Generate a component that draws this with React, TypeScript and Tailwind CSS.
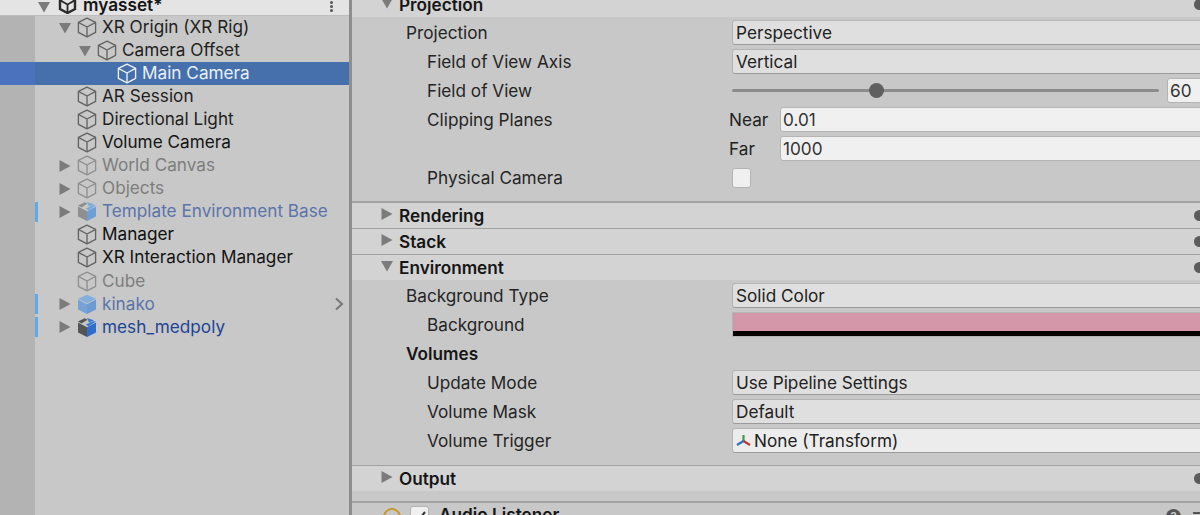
import React from "react";

function Cube({ color = "#636363" }: { color?: string }) {
  return (
    <svg width="20" height="21" viewBox="0 0 20 21" fill="none" stroke={color} strokeWidth="1.35" strokeLinejoin="round">
      <path d="M10 1.2 18.6 5.4V15.4L10 19.8 1.4 15.4V5.4Z" />
      <path d="M1.4 5.4 10 10 18.6 5.4M10 10V19.8" />
    </svg>
  );
}

function PrefabCube({ left, right, top, notch = true }: { left: string; right: string; top: string; notch?: boolean }) {
  return (
    <svg width="20" height="21" viewBox="0 0 20 21">
      <path d="M1 5.6 10 10.2V20L1 15.4Z" fill={left} />
      <path d="M19 5.6 10 10.2V20L19 15.4Z" fill={right} />
      {notch ? (
        <>
          <path d="M1 4.6 7.6 1.2 10.6 2.8 4.4 6.4Z" fill={left} />
          <path d="M8.6 7.8 15.4 4.2 19 4.4 11.6 9.2Z" fill={top} />
          <path d="M10 1 17 3.2 12 5.4Z" fill={top} />
        </>
      ) : (
        <path d="M10 .8 19 4.8 10 9.2 1 4.8Z" fill={top} />
      )}
    </svg>
  );
}

function Arrow({ open, color = "#7b7b7b" }: { open: boolean; color?: string }) {
  return (
    <svg width="12" height="12" viewBox="0 0 12 12">
      <path d={open ? "M0 1H12L6 11.5Z" : "M.5 0 11.5 6 .5 12Z"} fill={color} />
    </svg>
  );
}

function UnityMark() {
  return (
    <svg width="19" height="19" viewBox="0 0 19 19" fill="none" stroke="#2a2a2a" strokeWidth="2.4">
      <path d="M9.5 1 17 5.2V14L9.5 18 2 14V5.2Z" />
      <path d="M2 5.2 9.5 9.5 17 5.2M9.5 9.5V18" strokeWidth="1.8" />
    </svg>
  );
}

type TreeItem = {
  name: string;
  depth: number;
  arrow?: "open" | "closed";
  text: string;
  icon: React.ReactNode;
  selected?: boolean;
  marker?: boolean;
  chevron?: boolean;
};

const dark = "#1f1f1f";
const dim = "#7d7d7d";

const tree: TreeItem[] = [
  { name: "XR Origin (XR Rig)", depth: 0, arrow: "open", text: dark, icon: <Cube /> },
  { name: "Camera Offset", depth: 1, arrow: "open", text: dark, icon: <Cube /> },
  { name: "Main Camera", depth: 2, text: "#eaf0fb", icon: <Cube color="#eef3fb" />, selected: true },
  { name: "AR Session", depth: 0, text: dark, icon: <Cube /> },
  { name: "Directional Light", depth: 0, text: dark, icon: <Cube /> },
  { name: "Volume Camera", depth: 0, text: "#141414", icon: <Cube /> },
  { name: "World Canvas", depth: 0, arrow: "closed", text: dim, icon: <Cube color="#8f8f8f" /> },
  { name: "Objects", depth: 0, arrow: "closed", text: dim, icon: <Cube color="#8f8f8f" /> },
  { name: "Template Environment Base", depth: 0, arrow: "closed", text: "#5b74aa", icon: <PrefabCube left="#8f8f8f" right="#6d9fd6" top="#7aa9dc" />, marker: true },
  { name: "Manager", depth: 0, text: "#0f0f0f", icon: <Cube /> },
  { name: "XR Interaction Manager", depth: 0, text: "#141414", icon: <Cube /> },
  { name: "Cube", depth: 0, text: dim, icon: <Cube color="#8f8f8f" /> },
  { name: "kinako", depth: 0, arrow: "closed", text: "#5b74aa", icon: <PrefabCube left="#75a3d8" right="#6d9ad0" top="#83aede" notch={false} />, marker: true, chevron: true },
  { name: "mesh_medpoly", depth: 0, arrow: "closed", text: "#1e4593", icon: <PrefabCube left="#555555" right="#2f6fcb" top="#3a7ad2" />, marker: true },
];

function TreeRow({ item }: { item: TreeItem }) {
  return (
    <div className={`flex h-[23.05px] items-center ${item.selected ? "bg-[#4570ac]" : ""}`}>
      <div className={`flex h-full w-[35px] shrink-0 ${item.selected ? "bg-[#4a72bd]" : "bg-[#b3b3b3]"}`} />
      <div className={`h-[20px] w-[3px] shrink-0 ${item.marker ? "bg-[#5aabe8]" : ""}`} />
      <div className="flex items-center" style={{ paddingLeft: item.depth * 20 }}>
        <div className="flex w-[39px] shrink-0 items-center justify-start pl-[21px]">
          {item.arrow ? <Arrow open={item.arrow === "open"} /> : null}
        </div>
        <div className="flex w-[25px] shrink-0 items-center">{item.icon}</div>
        <span className="-translate-y-[1px] whitespace-nowrap text-[17.2px] leading-[23px]" style={{ color: item.text }}>{item.name}</span>
      </div>
      {item.chevron ? (
        <svg className="ml-auto mr-[5px]" width="10" height="14" viewBox="0 0 10 14" fill="none" stroke="#777" strokeWidth="2">
          <path d="M2 1.5 8 7 2 12.5" />
        </svg>
      ) : null}
    </div>
  );
}

function Section({ title, open, clip }: { title: string; open: boolean; clip?: boolean }) {
  return (
    <div className={`flex h-[25px] shrink-0 items-center bg-[#d3d3d3] pl-[29px] ${clip ? "-mt-[8px]" : ""}`}>
      <div className="w-[18px] -translate-y-[2px]"><Arrow open={open} /></div>
      <span className="text-[17.2px] font-semibold leading-[24px] text-[#161616]">{title}</span>
      <div className="-mr-[5px] ml-auto h-[11px] w-[11px] rounded-full bg-[#5c5c5c]" />
    </div>
  );
}

function Row({ label, sub, bold, children }: { label?: string; sub?: boolean; bold?: boolean; children?: React.ReactNode }) {
  return (
    <div className="flex h-[29px] shrink-0 items-center">
      <div className={`w-[380px] shrink-0 whitespace-nowrap text-[17.2px] leading-[24px] ${sub ? "pl-[75px]" : "pl-[54px]"} ${bold ? "font-semibold text-[#161616]" : "text-[#252525]"}`}>
        {label}
      </div>
      <div className="flex min-w-0 flex-1 items-center">{children}</div>
    </div>
  );
}

function Dropdown({ children, light }: { children: React.ReactNode; light?: boolean }) {
  return (
    <div className={`-mr-[10px] flex h-[25px] flex-1 items-center gap-[3px] rounded-[3px] border border-[#b4b4b4] border-b-[#9a9a9a] pl-[3px] text-[17.2px] leading-[22px] text-[#222] ${light ? "bg-[#ececec]" : "bg-[#dfdfdf]"}`}>
      {children}
    </div>
  );
}

function Field({ children, label }: { children: React.ReactNode; label: string }) {
  return (
    <>
      <span className="-ml-[3px] w-[51px] shrink-0 text-[17.2px] leading-[24px] text-[#222]">{label}</span>
      <div className="-mr-[10px] flex h-[25px] flex-1 items-center rounded-[3px] border border-[#b4b4b4] bg-[#f0f0f0] pl-[2px] text-[17.2px] leading-[22px] text-[#333]">
        {children}
      </div>
    </>
  );
}

function Line({ thin }: { thin?: boolean }) {
  return <div className={`shrink-0 bg-[#a2a2a2] ${thin ? "h-[1px]" : "h-[2px]"}`} />;
}

function TransformIcon() {
  return (
    <svg width="15" height="14" viewBox="0 0 15 14" fill="none" strokeWidth="2.2">
      <path d="M7.5 1V7" stroke="#3f9a4b" />
      <path d="M7.5 7 1 11" stroke="#2f6fc4" />
      <path d="M7.5 7 14 11" stroke="#b63a3a" />
    </svg>
  );
}

export default function App() {
  return (
    <div className="flex h-[515px] w-[1200px] overflow-hidden bg-[#c8c8c8] font-['Inter',sans-serif]">
      <div className="flex w-[349px] shrink-0 flex-col">
        <div className="flex h-[16px] shrink-0 items-center overflow-hidden border-b border-[#bcbcbc] bg-[#e4e4e4] pl-[38px]">
          <div className="w-[20px] -translate-y-[1px]"><Arrow open /></div>
          <div className="-mt-[6px] w-[25px]"><UnityMark /></div>
          <span className="-mt-[5px] text-[17.2px] font-semibold leading-[24px] text-[#151515]">myasset*</span>
          <div className="-mt-[3px] ml-auto mr-[16px] flex flex-col gap-[1px]">
            <div className="h-[3px] w-[3px] rounded-full bg-[#555]" />
            <div className="h-[3px] w-[3px] rounded-full bg-[#555]" />
            <div className="h-[3px] w-[3px] rounded-full bg-[#555]" />
          </div>
        </div>
        {tree.map((item) => (
          <TreeRow key={item.name} item={item} />
        ))}
        <div className="flex flex-1">
          <div className="w-[35px] bg-[#b3b3b3]" />
        </div>
      </div>
      <div className="w-[3px] shrink-0 bg-[#8e8e8e]" />
      <div className="flex min-w-0 flex-1 flex-col">
        <Section title="Projection" open clip />
        <div className="h-[1px] shrink-0" />
        <Row label="Projection"><Dropdown>Perspective</Dropdown></Row>
        <Row label="Field of View Axis" sub><Dropdown>Vertical</Dropdown></Row>
        <Row label="Field of View" sub>
          <div className="relative h-[3px] w-[427px] shrink-0 rounded-full bg-[#8c8c8c]">
            <div className="absolute left-[137px] top-[-6px] h-[15px] w-[15px] rounded-full bg-[#606060]" />
          </div>
          <div className="-mr-[10px] ml-[8px] flex h-[25px] flex-1 items-center rounded-[3px] border border-[#b4b4b4] bg-[#f0f0f0] pl-[2px] text-[17.2px] leading-[22px] text-[#333]">60</div>
        </Row>
        <Row label="Clipping Planes" sub><Field label="Near">0.01</Field></Row>
        <Row sub><Field label="Far">1000</Field></Row>
        <Row label="Physical Camera" sub>
          <div className="h-[20px] w-[19px] rounded-[3px] border border-[#b4b4b4] bg-[#f0f0f0]" />
        </Row>
        <div className="h-[9px] shrink-0" />
        <Line />
        <Section title="Rendering" open={false} />
        <Line thin />
        <Section title="Stack" open={false} />
        <Line thin />
        <Section title="Environment" open />
        <div className="h-[1px] shrink-0" />
        <Row label="Background Type"><Dropdown>Solid Color</Dropdown></Row>
        <Row label="Background" sub>
          <div className="-mr-[10px] flex h-[25px] flex-1 flex-col border border-[#b4b4b4]">
            <div className="flex-1 bg-[#d397a9]" />
            <div className="h-[5px] bg-black" />
          </div>
        </Row>
        <Row label="Volumes" bold />
        <Row label="Update Mode" sub><Dropdown>Use Pipeline Settings</Dropdown></Row>
        <Row label="Volume Mask" sub><Dropdown>Default</Dropdown></Row>
        <Row label="Volume Trigger" sub><Dropdown light><TransformIcon />None (Transform)</Dropdown></Row>
        <div className="h-[10px] shrink-0" />
        <Line thin />
        <Section title="Output" open={false} />
        <div className="h-[10px] shrink-0" />
        <Line />
        <div className="flex h-[24px] shrink-0 items-start bg-[#c8c8c8] pl-[31px] pt-[3px]">
          <div className="mr-[9px] mt-[2px] h-[18px] w-[18px] rounded-full border-2 border-[#c49a2c]" />
          <div className="mr-[10px] flex h-[20px] w-[19px] items-center justify-center rounded-[3px] border border-[#b4b4b4] bg-[#f0f0f0]">
            <svg width="12" height="12" viewBox="0 0 12 12" fill="none" stroke="#333" strokeWidth="2"><path d="M1 6.5 4.5 10 11 2" /></svg>
          </div>
          <span className="text-[17.2px] font-semibold leading-[17px] text-[#151515]">Audio Listener</span>
          <div className="ml-auto mr-[12px] mt-[3px] flex h-[15px] w-[15px] items-center justify-center rounded-full bg-[#555] text-[11px] font-bold text-[#c8c8c8]">?</div>
          <div className="-mr-[6px] mt-[6px] h-[2px] w-[13px] bg-[#555]" />
        </div>
      </div>
    </div>
  );
}
